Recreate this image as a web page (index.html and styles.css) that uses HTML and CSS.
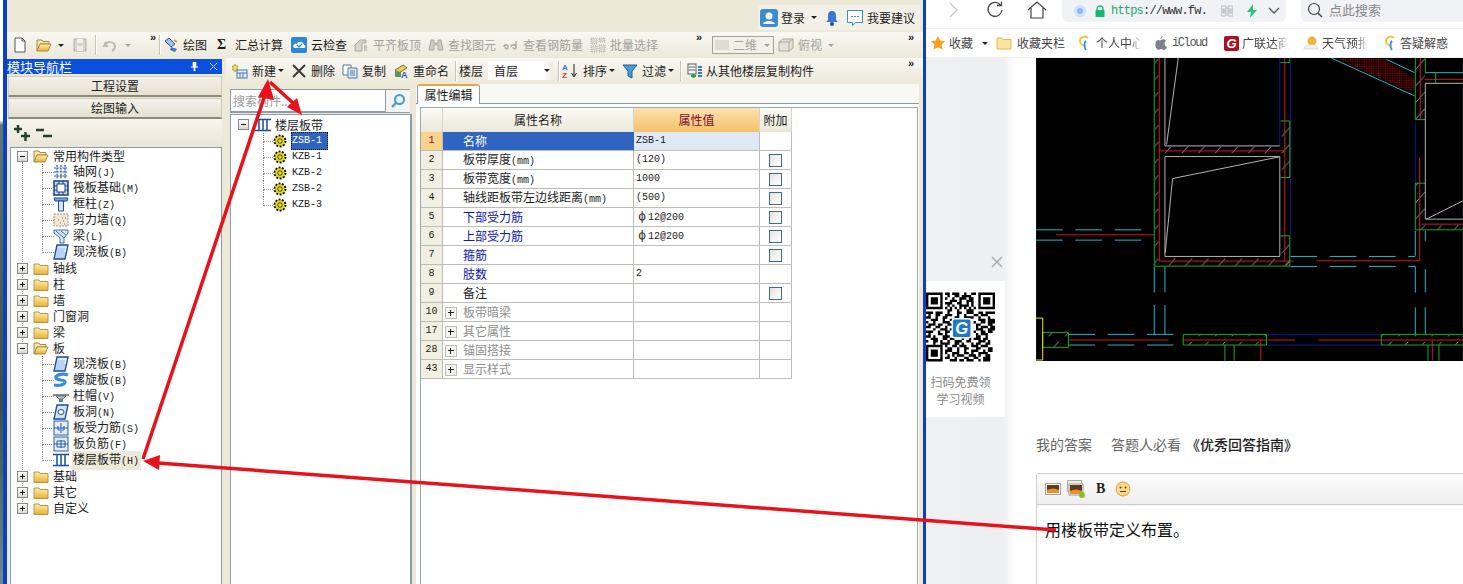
FILE: index.html
```html
<!DOCTYPE html>
<html lang="zh-CN">
<head>
<meta charset="utf-8">
<title>楼层板带</title>
<link rel="stylesheet" href="styles.css">
</head>
<body>
<svg class="defs" width="0" height="0" aria-hidden="true">
  <defs>
    <linearGradient id="fold" x1="0" y1="0" x2="0" y2="1"><stop offset="0" stop-color="#fff0b0"/><stop offset="1" stop-color="#e8b030"/></linearGradient>
    <pattern id="hatch" width="50" height="50" patternUnits="userSpaceOnUse"><path d="M6 42L36 8" stroke="#b8b8b8" stroke-width="2.4"/></pattern>
    <pattern id="dots" width="7" height="7" patternUnits="userSpaceOnUse"><rect width="7" height="7" fill="#1a0000"/><circle cx="3" cy="3" r="1.600" fill="#b80010"/></pattern>
    <symbol id="i-folder" viewBox="0 0 16 16"><path d="M1 4h5l1 1.500h8v9H1z" fill="url(#fold)" stroke="#b89540"/></symbol>
    <symbol id="i-open" viewBox="0 0 16 16"><path d="M1 3h5l1 1.500h6V7H4L1 14z" fill="#f5e6b0" stroke="#a88a40"/><path d="M1 14l3-7h11l-3 7z" fill="url(#fold)" stroke="#a88a40"/></symbol>
    <symbol id="i-grid" viewBox="0 0 16 16"><path d="M1 4h14M1 8h14M1 12h14M4 1v14M8 1v14M12 1v14" stroke="#2a58a8" stroke-width="1.200" stroke-dasharray="2 .8" fill="none"/></symbol>
    <symbol id="i-raft" viewBox="0 0 16 16"><rect x="1" y="1" width="14" height="14" fill="#cfe0f5" stroke="#143c8c" stroke-width="1.500"/><rect x="4" y="4" width="8" height="8" fill="#fff" stroke="#143c8c"/><path d="M1 6h3M1 10h3M12 6h3M12 10h3M6 1v3M10 1v3M6 12v3M10 12v3" stroke="#143c8c"/></symbol>
    <symbol id="i-col" viewBox="0 0 16 16"><path d="M1 2h14l-1 3H2z" fill="#7aa8dc" stroke="#1c4c94"/><path d="M5.500 5h5v10h-5z" fill="#d5e6f7" stroke="#1c4c94"/></symbol>
    <symbol id="i-wall" viewBox="0 0 16 16"><rect x="1" y="2" width="14" height="12" fill="#efe6d8" stroke="#c09070" stroke-dasharray="2 1"/><path d="M7 11h1M10 9h1M11 12h1M5 8h1M9 6h1M12 6h1" stroke="#8c6c58"/></symbol>
    <symbol id="i-beam" viewBox="0 0 16 16"><path d="M1 2h14v3l-4 5v5H7v-5L1 5z" fill="#dbe9f7" stroke="#3c70b0"/><path d="M3 3l8 7M8 3l5 4" stroke="#3c70b0"/></symbol>
    <symbol id="i-slab" viewBox="0 0 16 16"><path d="M4 1h11l-3 14H1z" fill="#b8d4f2" stroke="#1c4c94" stroke-width="1.300"/><path d="M5 3h8l-1 5" stroke="#fff" fill="none"/></symbol>
    <symbol id="i-spiral" viewBox="0 0 16 16"><path d="M15 3C9 1 2 3 3 6s9 1 9 4-6 4-11 3" fill="none" stroke="#3c8cd8" stroke-width="3.200"/></symbol>
    <symbol id="i-cap" viewBox="0 0 16 16"><path d="M0 6h16v2H0z" fill="#8a9098"/><path d="M3 8h10l-3 3H6z" fill="#c8ccd2" stroke="#666"/><path d="M6 11h4v3H6z" fill="#4c80c0"/></symbol>
    <symbol id="i-hole" viewBox="0 0 16 16"><path d="M4 1h11l-3 14H1z" fill="#cfe1f5" stroke="#1c4c94" stroke-width="1.300"/><ellipse cx="8" cy="8" rx="3" ry="2.500" fill="#fff" stroke="#1c4c94"/></symbol>
    <symbol id="i-rebar" viewBox="0 0 16 16"><rect x="1" y="1" width="14" height="14" fill="#e4eef9" stroke="#2a5ca8"/><path d="M1 8h14M8 3v10" stroke="#2a5ca8"/><path d="M5 6v4h2M11 6v4H9" stroke="#2a5ca8" fill="none"/></symbol>
    <symbol id="i-neg" viewBox="0 0 16 16"><rect x="1" y="1" width="14" height="14" fill="#e4eef9" stroke="#2a5ca8"/><path d="M1 8h14M8 4v8M4 5h8v6H4z" stroke="#2a5ca8" fill="none"/></symbol>
    <symbol id="i-strip" viewBox="0 0 16 16"><path d="M0 2.500h16M0 13.500h16" stroke="#1c4c94" stroke-width="1.400"/><path d="M4 3v10M8 3v10M12 3v10" stroke="#4a78b8" stroke-width="2"/></symbol>
    <symbol id="i-gear" viewBox="0 0 16 16"><circle cx="8" cy="8" r="5.500" fill="#e8dc10"/><circle cx="8" cy="8" r="5.500" fill="none" stroke="#111" stroke-width="1.800" stroke-dasharray="2 1.400"/><circle cx="8" cy="8" r="2.200" fill="#f4ec50" stroke="#333"/></symbol>
    <symbol id="i-dis" viewBox="0 0 16 16"><path d="M2 14V8l5-5h6v3H9v8z" fill="#d8d6cc" stroke="#aaa89e"/><path d="M11 8h3v6h-3z" fill="#c8c6bc"/></symbol>
    <symbol id="i-binoc" viewBox="0 0 16 16"><path d="M3 3h3v3h4V3h3l2 10h-5V8H6v5H1z" fill="#cfcdc3" stroke="#aaa89e"/></symbol>
  </defs>
</svg>

<div class="screen">
  <div class="desktop"></div>
  <div class="edge edge-left"></div>

  <div class="app">
    <div class="loginbar">
      <div class="login">
        <svg class="ic18" viewBox="0 0 18 18"><rect width="18" height="18" rx="3" fill="#3c8cd0"/><circle cx="9" cy="7" r="3.500" fill="#fff"/><path d="M3 15c1-4 11-4 12 0z" fill="#fff"/></svg>
        <span>登录</span><i class="caret caret-login"></i>
        <svg class="ic16 bell" viewBox="0 0 16 16"><path d="M8 1c3 0 4 2 4 5v4l2 2H2l2-2V6c0-3 1-5 4-5z" fill="#3a78d8"/><circle cx="8" cy="14" r="2" fill="#1c4c94"/></svg>
        <svg class="ic18 chat" viewBox="0 0 18 18"><path d="M1.500 1.500h15v12h-7l-3 3v-3h-5z" fill="#fff" stroke="#3c8cd0"/><path d="M5 7.500h2M8 7.500h2M11 7.500h2" stroke="#3c8cd0"/></svg>
        <span>我要建议</span>
      </div>
    </div>

    <div class="toolbar main-tools">
      <svg class="ic16" viewBox="0 0 16 16"><path d="M3 1h7l3 3v11H3z" fill="#fff" stroke="#555"/><path d="M10 1v3h3" fill="none" stroke="#555"/></svg>
      <svg class="ic16 t8" viewBox="0 0 16 16"><use href="#i-open"/></svg>
      <i class="caret c6 dark"></i>
      <svg class="ic16 t8" viewBox="0 0 16 16"><path d="M2 2h12v12H2z" fill="#d6d4cc" stroke="#b0aea4"/><path d="M5 2h6v4H5zM5 9h6v5H5z" fill="#efeee8"/></svg>
      <b class="sep s6"></b>
      <svg class="ic16 t6" viewBox="0 0 16 16"><path d="M4 5l-2 4 4 0M3 8c2-4 9-4 10 1 0 2-1 4-3 5" fill="none" stroke="#bdbbb2" stroke-width="2"/></svg>
      <i class="caret c6 dim"></i>
      <span class="more m-a"></span>
      <b class="sep s3"></b>
      <div class="tool t3"><svg class="ic16" viewBox="0 0 16 16"><path d="M2 4l4-3 6 6-4 3z" fill="#a0c0e8" stroke="#3c5c8c"/><path d="M8 10l6 2-2 3-5-2z" fill="#3c78c8"/><path d="M11 3l3 2" stroke="#d8a020" stroke-width="2"/></svg><span>绘图</span></div>
      <div class="tool t10"><span class="sigma">Σ</span><span class="gapx">汇总计算</span></div>
      <div class="tool"><svg class="ic16" viewBox="0 0 16 16"><rect width="16" height="16" rx="2" fill="#2a88d8"/><path d="M3 11c-2-3 1-5 3-4 1-3 6-3 7 1 2 0 2 3 0 3z" fill="#fff"/><path d="M6 8l2 2 3-3" stroke="#2a88d8" fill="none" stroke-width="1.300"/></svg><span>云检查</span></div>
      <div class="tool off off-first"><svg class="ic16" viewBox="0 0 16 16"><use href="#i-dis"/></svg><span>平齐板顶</span></div>
      <div class="tool off"><svg class="ic16" viewBox="0 0 16 16"><use href="#i-binoc"/></svg><span>查找图元</span></div>
      <div class="tool off"><svg class="ic16" viewBox="0 0 16 16"><path d="M1 10c0-3 4-3 4 0s-3 2-3 0M8 10c0-3 5-3 5 0s-3 2-3 0M13 4v7" fill="none" stroke="#aaa89e" stroke-width="1.300"/></svg><span>查看钢筋量</span></div>
      <div class="tool off"><svg class="ic16" viewBox="0 0 16 16"><path d="M1 1h6v6H1zM9 1h6v4H9zM1 9h6v6H1zM9 8h6v7H9z" fill="#dcdad0" stroke="#b0aea4" stroke-dasharray="1 1"/></svg><span>批量选择</span></div>
      <span class="more m38"></span>
      <div class="combo2d"><i class="swatch"></i><span>二维</span><i class="caret c6 dim"></i></div>
      <div class="tool view off"><svg class="ic16" viewBox="0 0 16 16"><path d="M1 5l4-3h10v9l-4 3H1z" fill="#e4e2d8" stroke="#aaa89e"/><path d="M1 5h10v9M11 5l4-3" fill="none" stroke="#aaa89e"/></svg><span>俯视</span></div>
      <i class="caret c6 dim m6"></i>
      <span class="more m-auto"></span>
    </div>

    <div class="workspace">
      <aside class="nav">
        <div class="nav-title"><span>模块导航栏</span>
          <svg class="pin" viewBox="0 0 10 12"><path d="M3 1h4v5h2v1H6v4H4V7H1V6h2z" fill="#fff"/></svg>
          <svg class="navx" viewBox="0 0 10 10"><path d="M1 1l8 8M9 1l-8 8" stroke="#dfe8ff"/></svg>
        </div>
        <button class="nav-btn">工程设置</button>
        <button class="nav-btn">绘图输入</button>
        <div class="nav-tools">
          <svg class="ic16" viewBox="0 0 16 16"><path d="M0 4h8M4 0v8M7 11h9M11.500 7v9" stroke="#24402c" stroke-width="2.400"/></svg>
          <svg class="ic16" viewBox="0 0 16 16"><path d="M0 5h8M7 11h9" stroke="#24402c" stroke-width="2.400"/></svg>
        </div>
        <div class="tree navtree">
          <div class="row top"><i class="exp minus"></i><svg class="ic16 fold" viewBox="0 0 16 16"><use href="#i-open"/></svg><span>常用构件类型</span></div>
          <div class="kid"><svg class="ic16" viewBox="0 0 16 16"><use href="#i-grid"/></svg><span>轴网<span class="lat">(J)</span></span></div>
          <div class="kid"><svg class="ic16" viewBox="0 0 16 16"><use href="#i-raft"/></svg><span>筏板基础<span class="lat">(M)</span></span></div>
          <div class="kid"><svg class="ic16" viewBox="0 0 16 16"><use href="#i-col"/></svg><span>框柱<span class="lat">(Z)</span></span></div>
          <div class="kid"><svg class="ic16" viewBox="0 0 16 16"><use href="#i-wall"/></svg><span>剪力墙<span class="lat">(Q)</span></span></div>
          <div class="kid"><svg class="ic16" viewBox="0 0 16 16"><use href="#i-beam"/></svg><span>梁<span class="lat">(L)</span></span></div>
          <div class="kid last"><svg class="ic16" viewBox="0 0 16 16"><use href="#i-slab"/></svg><span>现浇板<span class="lat">(B)</span></span></div>
          <div class="row top"><i class="exp plus"></i><svg class="ic16 fold" viewBox="0 0 16 16"><use href="#i-folder"/></svg><span>轴线</span></div>
          <div class="row top"><i class="exp plus"></i><svg class="ic16 fold" viewBox="0 0 16 16"><use href="#i-folder"/></svg><span>柱</span></div>
          <div class="row top"><i class="exp plus"></i><svg class="ic16 fold" viewBox="0 0 16 16"><use href="#i-folder"/></svg><span>墙</span></div>
          <div class="row top"><i class="exp plus"></i><svg class="ic16 fold" viewBox="0 0 16 16"><use href="#i-folder"/></svg><span>门窗洞</span></div>
          <div class="row top"><i class="exp plus"></i><svg class="ic16 fold" viewBox="0 0 16 16"><use href="#i-folder"/></svg><span>梁</span></div>
          <div class="row top"><i class="exp minus"></i><svg class="ic16 fold" viewBox="0 0 16 16"><use href="#i-open"/></svg><span>板</span></div>
          <div class="kid"><svg class="ic16" viewBox="0 0 16 16"><use href="#i-slab"/></svg><span>现浇板<span class="lat">(B)</span></span></div>
          <div class="kid"><svg class="ic16" viewBox="0 0 16 16"><use href="#i-spiral"/></svg><span>螺旋板<span class="lat">(B)</span></span></div>
          <div class="kid"><svg class="ic16" viewBox="0 0 16 16"><use href="#i-cap"/></svg><span>柱帽<span class="lat">(V)</span></span></div>
          <div class="kid"><svg class="ic16" viewBox="0 0 16 16"><use href="#i-hole"/></svg><span>板洞<span class="lat">(N)</span></span></div>
          <div class="kid"><svg class="ic16" viewBox="0 0 16 16"><use href="#i-rebar"/></svg><span>板受力筋<span class="lat">(S)</span></span></div>
          <div class="kid"><svg class="ic16" viewBox="0 0 16 16"><use href="#i-neg"/></svg><span>板负筋<span class="lat">(F)</span></span></div>
          <div class="kid last"><svg class="ic16" viewBox="0 0 16 16"><use href="#i-strip"/></svg><span class="hl">楼层板带<span class="lat">(H)</span></span></div>
          <div class="row top"><i class="exp plus"></i><svg class="ic16 fold" viewBox="0 0 16 16"><use href="#i-folder"/></svg><span>基础</span></div>
          <div class="row top"><i class="exp plus"></i><svg class="ic16 fold" viewBox="0 0 16 16"><use href="#i-folder"/></svg><span>其它</span></div>
          <div class="row top"><i class="exp plus"></i><svg class="ic16 fold" viewBox="0 0 16 16"><use href="#i-folder"/></svg><span>自定义</span></div>
        </div>
      </aside>

      <section class="center">
        <div class="toolbar center-tools">
          <div class="tool first"><svg class="ic16" viewBox="0 0 16 16"><path d="M3 1l1 2 2 0-1 2 1 2-2 0-1 2-1-2-2 0 1-2-1-2 2 0z" fill="#f0d860" stroke="#a08820" stroke-width=".6"/><rect x="5" y="7" width="10" height="8" fill="#e4eefa" stroke="#4a78b8"/><path d="M5 10h10M8 10v5M11 10v5" stroke="#4a78b8"/></svg><span>新建</span><i class="caret c6 dark"></i></div>
          <div class="tool"><svg class="ic16" viewBox="0 0 16 16"><path d="M2 2l12 12M14 2L2 14" stroke="#3a3a3a" stroke-width="2"/></svg><span>删除</span></div>
          <div class="tool"><svg class="ic16" viewBox="0 0 16 16"><path d="M1 2h8v10H1z" fill="#fff" stroke="#5078a8"/><path d="M6 5h9v10H6z" fill="#dce8f5" stroke="#5078a8"/><path d="M8 8h5M8 10h5M8 12h5" stroke="#5078a8"/></svg><span>复制</span></div>
          <div class="tool"><svg class="ic16" viewBox="0 0 16 16"><path d="M2 7l8-5 4 3-8 5z" fill="#e8c860" stroke="#807030"/><path d="M2 8v6h6V9z" fill="#609060"/><text class="azmini" x="8" y="15">A</text></svg><span>重命名</span></div>
          <b class="sep s7"></b>
          <span class="floor-label">楼层</span>
          <div class="floor-combo"><span>首层</span><i class="caret c6 dark"></i></div>
          <b class="sep s5"></b>
          <div class="tool t3"><svg class="ic16" viewBox="0 0 16 16"><text class="azA" x="0" y="7">A</text><text class="azZ" x="0" y="15">Z</text><path d="M12 1v12M9.500 10l2.500 4 2.500-4" stroke="#222" fill="none"/></svg><span class="gap3">排序</span><i class="caret c6 dark"></i></div>
          <div class="tool"><svg class="ic16" viewBox="0 0 16 16"><path d="M1 2h14L10 8v7l-4-2V8z" fill="#4a9ad8" stroke="#206090"/></svg><span>过滤</span><i class="caret c6 dark"></i></div>
          <b class="sep s7"></b>
          <div class="tool t6 gap2"><svg class="ic16" viewBox="0 0 16 16"><rect x="1" y="1" width="8" height="10" fill="#fff" stroke="#505868"/><path d="M2 4h6M2 7h6" stroke="#505868"/><path d="M4 13h5M6.500 11v4" stroke="#20a040" stroke-width="2"/><path d="M11 4h4M11 7h4M11 10h4M11 13h4" stroke="#3c78b8" stroke-width="2"/></svg><span>从其他楼层复制构件</span></div>
          <span class="more m-auto"></span>
        </div>

        <div class="panes">
          <div class="pick">
            <div class="search"><span class="ph">搜索构件...</span><div class="search-btn"><svg class="ic16" viewBox="0 0 16 16"><circle cx="9.500" cy="6.500" r="4.500" fill="#eaf4fb" stroke="#4a98cc" stroke-width="2"/><path d="M6 10l-4 4" stroke="#4a98cc" stroke-width="2.400"/></svg></div></div>
            <div class="tree comptree">
              <div class="row top"><i class="exp minus"></i><svg class="ic16 fold2" viewBox="0 0 16 16"><use href="#i-strip"/></svg><span>楼层板带</span></div>
              <div class="kid"><svg class="ic16" viewBox="0 0 16 16"><use href="#i-gear"/></svg><span class="lat lat-sel">ZSB-1</span></div>
              <div class="kid"><svg class="ic16" viewBox="0 0 16 16"><use href="#i-gear"/></svg><span class="lat">KZB-1</span></div>
              <div class="kid"><svg class="ic16" viewBox="0 0 16 16"><use href="#i-gear"/></svg><span class="lat">KZB-2</span></div>
              <div class="kid"><svg class="ic16" viewBox="0 0 16 16"><use href="#i-gear"/></svg><span class="lat">ZSB-2</span></div>
              <div class="kid last"><svg class="ic16" viewBox="0 0 16 16"><use href="#i-gear"/></svg><span class="lat">KZB-3</span></div>
            </div>
          </div>

          <div class="props">
            <div class="tabs"><div class="tab">属性编辑</div></div>
            <div class="prop-body">
              <table class="grid">
                <colgroup><col class="c-n"><col class="c-k"><col class="c-v"><col class="c-x"></colgroup>
                <thead><tr><th></th><th>属性名称</th><th class="th-on">属性值</th><th>附加</th></tr></thead>
                <tbody>
                  <tr class="sel"><td class="num">1</td><td class="key">名称</td><td class="val lat">ZSB-1</td><td></td></tr>
                  <tr><td class="num">2</td><td class="key">板带厚度<span class="lat">(mm)</span></td><td class="val lat">(120)</td><td class="chk"><i class="box"></i></td></tr>
                  <tr><td class="num">3</td><td class="key">板带宽度<span class="lat">(mm)</span></td><td class="val lat">1000</td><td class="chk"><i class="box"></i></td></tr>
                  <tr><td class="num">4</td><td class="key">轴线距板带左边线距离<span class="lat">(mm)</span></td><td class="val lat">(500)</td><td class="chk"><i class="box"></i></td></tr>
                  <tr><td class="num">5</td><td class="key blue">下部受力筋</td><td class="val lat"><span class="rebar">ф</span>12@200</td><td class="chk"><i class="box"></i></td></tr>
                  <tr><td class="num">6</td><td class="key blue">上部受力筋</td><td class="val lat"><span class="rebar">ф</span>12@200</td><td class="chk"><i class="box"></i></td></tr>
                  <tr><td class="num">7</td><td class="key blue">箍筋</td><td class="val"></td><td class="chk"><i class="box"></i></td></tr>
                  <tr><td class="num">8</td><td class="key blue">肢数</td><td class="val lat">2</td><td></td></tr>
                  <tr><td class="num">9</td><td class="key">备注</td><td class="val"></td><td class="chk"><i class="box"></i></td></tr>
                  <tr class="group"><td class="num">10</td><td class="key"><i class="gplus"></i>板带暗梁</td><td></td><td></td></tr>
                  <tr class="group"><td class="num">17</td><td class="key"><i class="gplus"></i>其它属性</td><td></td><td></td></tr>
                  <tr class="group"><td class="num">28</td><td class="key"><i class="gplus"></i>锚固搭接</td><td></td><td></td></tr>
                  <tr class="group"><td class="num">43</td><td class="key"><i class="gplus"></i>显示样式</td><td></td><td></td></tr>
                </tbody>
              </table>
            </div>
          </div>
        </div>
      </section>
    </div>
  </div>

  <div class="edge edge-right"></div>

  <div class="browser">
    <div class="addrbar">
      <svg class="nav-ic back" viewBox="0 0 20 20"><path d="M7 3l7 7-7 7" fill="none" stroke="#c8c8c8" stroke-width="1.300"/></svg>
      <svg class="nav-ic reload" viewBox="0 0 20 20"><path d="M15.500 5A7 7 0 1 0 17 10" fill="none" stroke="#444" stroke-width="1.300"/><path d="M12 5.500h4.500V1.500" fill="none" stroke="#444" stroke-width="1.300"/></svg>
      <svg class="nav-ic home" viewBox="0 0 20 20"><path d="M1 10l9-8 9 8M4 8v10h12V8" fill="none" stroke="#444" stroke-width="1.200"/></svg>
      <div class="url">
        <svg class="url-shield" viewBox="0 0 14 14"><circle cx="7" cy="7" r="6" fill="#cfe0fb"/><circle cx="7" cy="7" r="3" fill="#90b8f4"/></svg>
        <svg class="url-lock" viewBox="0 0 12 12"><path d="M3 5V4a3 3 0 0 1 6 0v1" fill="none" stroke="#16b870" stroke-width="1.300"/><rect x="1.500" y="5" width="9" height="7" rx="1" fill="#16b870"/></svg>
        <span class="url-text"><span class="url-https">https</span>://www.fw.</span>
        <svg class="url-apps" viewBox="0 0 12 12"><path d="M0 1h5v3H0zM7 1h5v3H7zM0 5h3v2H0zM4 5h4v2H4zM9 5h3v2H9zM0 8h5v3H0zM7 8h5v3H7z" fill="none" stroke="#aab0b8" stroke-width=".8"/></svg>
        <svg class="url-bolt" viewBox="0 0 10 14"><path d="M6 0L0 8h4l-1 6 7-8H6z" fill="#20c878"/></svg>
        <svg class="url-chev" viewBox="0 0 12 8"><path d="M1 1l5 5 5-5" fill="none" stroke="#555" stroke-width="1.300"/></svg>
      </div>
      <div class="websearch">
        <svg class="mag" viewBox="0 0 16 16"><circle cx="7" cy="7" r="5.500" fill="none" stroke="#444" stroke-width="1.200"/><path d="M11 11l4 4" stroke="#444" stroke-width="1.400"/></svg>
        <span>点此搜索</span>
      </div>
    </div>
    <div class="bookmarks">
      <div class="bm bm1"><svg class="ic16" viewBox="0 0 16 16"><path d="M8 1l2.200 4.600 5 .6-3.700 3.400 1 5L8 12.200 3.500 14.600l1-5L.8 6.200l5-.6z" fill="#f5a020"/></svg><span>收藏</span></div>
      <i class="caret c6 dark bm-caret"></i>
      <div class="bm bm2"><svg class="ic16" viewBox="0 0 16 16"><path d="M1 3h5l1 1.500h8V14H1z" fill="#fbe3a0" stroke="#e8b850"/></svg><span>收藏夹栏</span></div>
      <div class="bm bm3"><svg class="ic-c" viewBox="0 0 12 16"><path d="M10 3C7 0 2 2 2 6s3 4 5 5" fill="none" stroke="#f0c040" stroke-width="1.800"/><path d="M8 6c-2 2-2 6 0 9" fill="none" stroke="#3090e0" stroke-width="1.800"/></svg><span class="fade">个人中心</span></div>
      <div class="bm bm4"><svg class="ic-c" viewBox="0 0 12 16"><path d="M8 1C7 3 6 4 5 4c1-2 2-3 3-3zM6 5c2-1 4-1 5 1-2 1-2 5 1 6-1 2-2 3-3 3s-2-1-3-1-2 1-3 1c-3-2-4-9 0-10 1 0 2 1 3 0z" fill="#7c8288"/></svg><span class="lat bm-lat">iCloud</span></div>
      <div class="bm bm5"><span class="glogo">G</span><span class="fade">广联达商</span></div>
      <div class="bm bm6"><svg class="ic16" viewBox="0 0 16 16"><circle cx="9" cy="6" r="4.500" fill="#f5b040"/><path d="M1 14c0-3 3-5 6-4 2-1 7 0 8 4z" fill="#eef2f6" stroke="#c8d0d8" stroke-width=".7"/></svg><span class="fade">天气预报</span></div>
      <div class="bm bm7"><svg class="ic-c" viewBox="0 0 12 16"><path d="M10 3C7 0 2 2 2 6s3 4 5 5" fill="none" stroke="#f0c040" stroke-width="1.800"/><path d="M8 6c-2 2-2 6 0 9" fill="none" stroke="#3090e0" stroke-width="1.800"/></svg><span>答疑解惑</span></div>
    </div>
    <div class="page">
      <aside class="float">
        <svg class="float-x" viewBox="0 0 12 12"><path d="M1 1l10 10M11 1L1 11" stroke="#a8aaae" stroke-width="1.400"/></svg>
        <div class="qr-card">
          <svg class="qr" viewBox="0 0 29 29">
            <path class="qr-f" d="M0 0h7v7H0zM1 1v5h5V1zM2 2h3v3H2zM22 0h7v7h-7zM23 1v5h5V1zM24 2h3v3h-3zM0 22h7v7H0zM1 23v5h5v-5zM2 24h3v3H2z"/>
            <path class="qr-d" transform="translate(0 .5)" d="M8 0h2m1 0h3m2 0h1m2 0h2M9 1h1m2 0h2m1 0h4M8 2h1m2 0h1m2 0h3m1 0h2M10 3h3m1 0h1m2 0h3M8 4h3m2 0h2m2 0h1m1 0h1M9 5h1m1 0h1m2 0h4m1 0h1M8 6h1m1 0h1m1 0h1m1 0h1m1 0h1m1 0h1m1 0h1M9 7h2m2 0h1m3 0h3M0 8h3m1 0h3m2 0h1m3 0h2m2 0h3m2 0h2m1 0h4M1 9h1m2 0h2m2 0h3m2 0h1m2 0h1m3 0h2m1 0h3M0 10h2m2 0h1m2 0h2m3 0h2m2 0h4m2 0h1m3 0h1M2 11h3m2 0h1m2 0h3m1 0h1m7 0h3m1 0h3M0 12h1m2 0h1m3 0h3m1 0h1m8 0h1m2 0h2m1 0h3M1 13h3m1 0h2m2 0h2m1 0h1m8 0h2m3 0h2M0 14h2m2 0h2m2 0h1m2 0h1m9 0h1m1 0h3m1 0h2M3 15h1m2 0h3m1 0h2m9 0h3m2 0h3M0 16h3m2 0h1m2 0h2m2 0h1m7 0h1m2 0h2m1 0h2M1 17h1m3 0h2m1 0h1m3 0h4m2 0h1m2 0h1m1 0h3M0 18h2m1 0h1m3 0h3m2 0h2m1 0h4m2 0h2m2 0h1M2 19h3m2 0h2m1 0h2m3 0h1m2 0h1m1 0h3m1 0h2M0 20h1m2 0h2m1 0h1m2 0h1m2 0h3m2 0h2m3 0h3m1 0h1M3 21h1m2 0h4m2 0h2m1 0h1m3 0h1m1 0h2m2 0h2M8 22h1m2 0h2m1 0h3m2 0h3m1 0h3M9 23h2m2 0h1m2 0h2m3 0h2m3 0h2M8 24h3m2 0h1m2 0h1m2 0h3m2 0h1m1 0h2M8 25h1m2 0h3m2 0h2m1 0h1m2 0h4M9 26h1m1 0h1m1 0h3m2 0h3m1 0h1m2 0h2M8 27h2m2 0h1m3 0h2m2 0h2m2 0h3M10 28h3m1 0h2m1 0h3m2 0h1m1 0h3"/>
            <rect class="qr-logo" x="11" y="11" width="8" height="8" rx="1"/>
            <text class="qr-g" x="15" y="17.500">G</text>
          </svg>
          <p class="qr-text">扫码免费领<br>学习视频</p>
        </div>
      </aside>
      <main class="answer">
        <svg class="cad" viewBox="18 6 1282 910">
          <rect class="bg" x="18" y="6" width="1282" height="910"/>
          <g class="h">
            <rect x="375" y="6" width="30" height="624" class="hatch"/><rect x="405" y="272" width="345" height="28" class="hatch"/><rect x="405" y="604" width="375" height="26" class="hatch"/><rect x="752" y="195" width="28" height="170" class="hatch"/><rect x="752" y="540" width="28" height="90" class="hatch"/><rect x="1157" y="6" width="30" height="185" class="hatch"/><rect x="1157" y="382" width="30" height="140" class="hatch"/><rect x="1187" y="492" width="113" height="30" class="hatch"/><rect x="460" y="837" width="250" height="30" class="hatch"/><rect x="1055" y="837" width="245" height="30" class="hatch"/><rect x="38" y="830" width="77" height="45" class="hatch"/>
          </g>
          <path class="dots" d="M920 8h145l90 62v35l-35-5z"/>
          <path class="cy" d="M905 6l250 114M1070 10l85 40"/>
          <path class="cy dash" d="M18 522H372M18 553H372M782 602H1157M782 632H1157M115 836H460M115 868H460"/>
          <path class="cy" d="M373 632v78M373 748v88M405 632v78M405 748v88M1157 632v78M1157 755v81M1187 525v30M1187 640v70M1187 755v81M1157 525v75M1187 50H1300"/>
          <path class="bl" d="M750 6v264M782 20v520M1157 200v180M715 837h340M715 868h340"/>
          <path class="rd" d="M388 6v610h403M765 6v610M388 285h377M78 537h295M860 615h310V305M1172 6v185M1185 70h115M1175 505h125M115 853h300M460 853h250M715 853h80M865 853h435M693 853v62M1208 853v62"/>
          <path class="gn" d="M373 6v625h407v-91h-28M780 365h-28M752 195h28v170M752 20h28V6M1157 6v185h30M1187 6v44M1218 50v30M1157 382h30M1157 382v140h143M460 836h250v32H460zM1055 836h245M1055 868h245M1055 836v32M38 830h77v45H38zM585 868v47M613 868v47M1195 868v47M1228 868v47"/>
          <path class="gy" d="M405 6v264h345M405 302h345v300H405zM445 6l-35 260M748 303l-320 65-22 222M1187 82h113M1187 82v408h113M1190 490l110-55"/>
          <path class="yl" d="M18 787h20v126H18"/>
        </svg>
        <div class="ans-tabs"><span>我的答案</span><span class="t2">答题人必看</span><span class="t3b">《优秀回答指南》</span></div>
        <div class="editor">
          <div class="ed-tools">
            <svg class="ed-ic" viewBox="0 0 16 12"><rect x=".5" y=".5" width="15" height="11" fill="#fff" stroke="#b0a090"/><rect x="2" y="2" width="12" height="8" fill="#5c3c20"/><path d="M2 7c4-2 8-2 12 0v3H2z" fill="#e89030"/></svg>
            <svg class="ed-ic2" viewBox="0 0 18 18"><rect x=".5" y=".5" width="14" height="11" fill="#eee" stroke="#aaa"/><rect x="2" y="4" width="14" height="11" fill="#fff" stroke="#a89888"/><rect x="3" y="5" width="12" height="9" fill="#5c3c20"/><path d="M3 11c4-2 8-2 12 0v3H3z" fill="#e89030"/><circle cx="15" cy="15" r="3" fill="#80c030"/></svg>
            <b class="ed-b">B</b>
            <svg class="ed-ic3" viewBox="0 0 16 16"><circle cx="8" cy="8" r="7" fill="#fbd890" stroke="#e0a040"/><circle cx="5.500" cy="6.500" r="1" fill="#704010"/><circle cx="10.500" cy="6.500" r="1" fill="#704010"/><path d="M5 10.500h6" stroke="#704010"/></svg>
          </div>
          <p class="ed-text">用楼板带定义布置。</p>
        </div>
      </main>
    </div>
  </div>

  <svg class="arrows" viewBox="0 0 1463 584">
    <path class="ar" d="M1056 530L158 463M143 459L265 95M270 82L293 103"/>
    <path class="arh" d="M143 461L160 455L159 470zM268 79L258 97L274 100zM302 115L287 107L297 98z"/>
  </svg>
</div>
</body>
</html>
```
FILE: styles.css
```css
* { box-sizing: border-box; }
html, body { margin: 0; padding: 0; }
body { font: 12px/16px "Noto Sans CJK SC", "Liberation Sans", sans-serif; color: #1c1c1c; background: #fff; overflow: hidden; }
.defs { position: absolute; }
.screen { position: relative; display: flex; width: 1463px; height: 584px; overflow: hidden; }
.desktop { width: 3px; background: linear-gradient(#fff 0, #fff 120px, #5c7a6c 125px, #34503f 400px, #6c8a90 584px); }
.edge { background: #0c3fc8; }
.edge-left { width: 4px; }
.edge-right { width: 3px; }
.app { width: 916px; background: #ece9d8; display: flex; flex-direction: column; }
svg { display: block; flex: none; }
.ic16 { width: 16px; height: 16px; }
.ic18 { width: 18px; height: 18px; }
.lat { font-family: "Liberation Mono", monospace; font-size: 10px; }

.loginbar { height: 32px; display: flex; justify-content: flex-end; padding: 5px 3px 2px 0; flex: none; }
.login { width: 162px; display: flex; align-items: center; background: #f3f1e7; padding-left: 2px; }
.login span { white-space: nowrap; }
.login > span:nth-of-type(1) { margin-left: 3px; }
.login > span:nth-of-type(2) { margin-left: 3px; }
.caret-login { margin-left: 6px; }
.bell { margin-left: 7px; }
.chat { margin-left: 6px; }

.toolbar { display: flex; align-items: center; background: linear-gradient(#f9f8f2, #ece9db); white-space: nowrap; flex: none; }
.main-tools { height: 26px; padding-left: 5px; }
.center-tools { height: 25px; padding-left: 6px; }
.tool { display: flex; align-items: center; gap: 4px; margin-left: 8px; }
.tool.first { margin-left: 0; }
.tool.off { color: #a3a19a; margin-left: 7px; }
.tool.off-first { margin-left: 6px; }
.tool.view { margin-left: 4px; }
.t3 { margin-left: 3px; }
.t6 { margin-left: 6px; }
.t8 { margin-left: 8px; }
.t10 { margin-left: 10px; }
.gapx { margin-left: 4px; }
.gap3 { margin-left: 1px; }
.gap2 { gap: 3px; }
.sigma { font: bold 14px/16px "Liberation Serif", serif; width: 10px; }
.sep { display: block; width: 1px; height: 20px; background: #c8c5b4; box-shadow: 1px 0 #fff; flex: none; }
.s3 { margin-left: 1px; }
.s5 { margin-left: 5px; }
.s6 { margin-left: 7px; }
.s7 { margin-left: 6px; }
.caret { display: block; flex: none; width: 0; height: 0; border-style: solid; border-width: 3px 3px 0; border-color: #222 transparent transparent; }
.c6 { margin-left: 2px; }
.caret.dim { border-top-color: #a3a19a; margin-left: 7px; }
.caret.dark { margin-left: 2px; }
.main-tools > .caret.dark { margin-left: 6px; }
.caret.m6 { margin-left: 6px; }
.more { width: 8px; height: 8px; flex: none; position: relative; align-self: flex-start; margin-top: 4px; }
.more::before { content: "»"; position: absolute; left: 0; top: -5px; font: bold 11px/12px "Liberation Sans", sans-serif; color: #222; }
.m-a { margin-left: 19px; }
.m38 { margin-left: 38px; }
.m-auto { margin-left: auto; margin-right: 7px; }
.combo2d { display: flex; align-items: center; width: 62px; height: 18px; margin-left: 8px; border: 1px solid #a3a19a; color: #a3a19a; padding: 0 2px; background: #f3f1e7; }
.swatch { display: block; width: 14px; height: 10px; background: #dedcd2; margin-right: 4px; }

.center-tools .tool { margin-left: 7px; }
.center-tools .tool.first { margin-left: 0; }
.center-tools .tool.t3 { margin-left: 3px; }
.center-tools .tool.t6 { margin-left: 6px; }

.workspace { flex: 1; display: flex; min-height: 0; }
.nav { width: 215px; padding-top: 1px; display: flex; flex-direction: column; flex: none; }
.nav-title { height: 15px; background: #0b50dc; color: #fff; font-size: 13px; line-height: 15px; display: flex; align-items: center; }
.pin { width: 9px; height: 11px; margin-left: auto; margin-right: 10px; }
.navx { width: 9px; height: 9px; margin-right: 4px; }
.nav-btn { display: block; height: 21px; margin: 2px 0 0 1px; width: 214px; padding: 0; font: inherit; color: #1c1c1c; background: linear-gradient(#f4f2ea, #e4e1d0); border: 1px solid #cfccbc; border-bottom: 2px solid #8c897a; }
.nav-btn + .nav-btn { margin-top: 1px; }
.nav-tools { height: 28px; display: flex; align-items: center; gap: 6px; padding-left: 7px; background: linear-gradient(#f7f5ed, #e9e6d8); }
.tree { position: relative; background: #fff; border: 1px solid #8d9ca8; flex: 1; }
.navtree { margin-left: 3px; border-bottom: 0; }
.navtree::before { content: ""; position: absolute; left: 11px; top: 14px; height: 350px; border-left: 1px dotted #8a8a8a; }
.row { height: 16px; display: flex; align-items: center; position: relative; white-space: nowrap; }
.row.top { padding-left: 6px; }
.exp { display: block; width: 11px; height: 11px; border: 1px solid #8a8a8a; background: linear-gradient(#fff, #d8d8d0); position: relative; flex: none; z-index: 1; }
.exp::before { content: ""; position: absolute; left: 2px; top: 4px; width: 5px; height: 1px; background: #111; }
.plus::after { content: ""; position: absolute; left: 4px; top: 2px; width: 1px; height: 5px; background: #111; }
.fold { margin: 0 4px 0 5px; }
.kid { height: 16px; display: flex; align-items: center; position: relative; white-space: nowrap; padding-left: 42px; }
.kid svg { margin-right: 4px; }
.kid::before { content: ""; position: absolute; left: 31px; top: 0; width: 11px; height: 8px; border-left: 1px dotted #8a8a8a; border-bottom: 1px dotted #8a8a8a; }
.kid::after { content: ""; position: absolute; left: 31px; top: 8px; height: 8px; border-left: 1px dotted #8a8a8a; }
.kid.last::after { display: none; }
.hl { background: #ece9d8; padding: 0 2px 0 1px; margin-left: -1px; }

.center { width: 697px; display: flex; flex-direction: column; margin-left: 4px; flex: none; margin-right: -4px; }
.floor-label { margin-left: 3px; }
.floor-combo { width: 65px; height: 19px; margin-left: 5px; background: linear-gradient(90deg, #fff 85%, #eeece2); display: flex; align-items: center; justify-content: space-between; padding: 0 3px 0 6px; }
.center-tools .floor-combo .caret { margin: 0; }
.center-tools > .tool .caret { margin-left: -2px; }
.center-tools .tool > span { line-height: 16px; }
.panes { flex: 1; display: flex; min-height: 0; padding-top: 1px; }
.pick { width: 190px; padding: 5px 4px 0 4px; display: flex; flex-direction: column; flex: none; }
.search { height: 24px; display: flex; align-items: center; background: #fff; border: 1px solid #8d9ca8; border-right: 0; border-bottom: 2px solid #8d9ca8; margin-right: 2px; }
.ph { flex: 1; padding-left: 2px; color: #9a9a9a; font-size: 12px; border-right: 1px solid #8d9ca8; height: 22px; line-height: 21px; }
.search-btn { width: 24px; height: 22px; display: flex; align-items: center; justify-content: center; background: #f4f4f2; }
.comptree { margin: 1px 0 0; border: 1px solid #8d9ca8; border-width: 1px 2px 0 1px; padding-top: 1px; }
.comptree .row.top { padding-left: 7px; height: 17px; }
.fold2 { margin: 0 4px 0 6px; }
.comptree .kid { padding-left: 41px; }
.comptree .kid::before, .comptree .kid::after { left: 32px; }
.comptree .kid::before { width: 9px; }
.lat-sel { background: #2f65c0; color: #fff; padding: 1px 6px 1px 1px; margin-left: -1px; outline: 1px dotted #111; outline-offset: -1px; }
.props { width: 503px; background: #fff; display: flex; flex-direction: column; flex: none; }
.tabs { height: 20px; background: #f8f8f5; border-bottom: 1px solid #8d9ca8; padding-left: 1px; flex: none; }
.tab { width: 63px; height: 20px; background: #fff; border: 1px solid #8d9ca8; border-top: 2px solid #f0a640; border-bottom: 0; border-radius: 3px 3px 0 0; text-align: center; line-height: 18px; }
.prop-body { flex: 1; margin: 3px 1px 0 4px; border: 1px solid #9aa8b4; border-bottom: 0; background: #fff; }
.grid { width: 371px; table-layout: fixed; border-collapse: separate; border-spacing: 0; }
.c-n { width: 22px; } .c-k { width: 191px; } .c-v { width: 126px; } .c-x { width: 32px; }
.grid th { height: 24px; font-weight: 400; background: linear-gradient(#fbfaf4, #ebe8da); border-right: 1px solid #d8d5c6; padding: 0; }
.grid .th-on { background: linear-gradient(#fbe3b0, #f4c068); color: #7a0b33; }
.grid td { height: 19px; padding: 0; line-height: 14px; border-right: 1px solid #bdbdb8; border-bottom: 1px solid #bdbdb8; white-space: nowrap; overflow: hidden; }
.grid .num { background: #f1efe2; text-align: center; font: 10px/14px "Liberation Mono", monospace; }
.sel .num { background: #fbd28a; color: #8a0d2c; }
.sel .key { background: #2f65c0; color: #fff; border-right-color: #2f65c0; }
.sel .val { background: #dfe8f5; }
.key { padding-left: 20px !important; }
.key.blue { color: #0c16b0; }
.val { padding-left: 2px !important; }
.rebar { display: inline-block; width: 12px; text-align: center; font-size: 12px; }
.chk { text-align: center; }
.box { display: block; width: 13px; height: 13px; margin: 0 auto; border: 1px solid #456a80; background: linear-gradient(135deg, #e4e4de, #fff); }
.group .key { color: #8e8e8e; padding-left: 2px !important; }
.group .num { background: #f1efe2; }
.gplus { display: inline-block; vertical-align: -2px; width: 12px; height: 12px; margin-right: 6px; border: 1px solid #bdbdb8; background: #f4f4f0; position: relative; }
.gplus::before { content: ""; position: absolute; left: 2px; top: 4px; width: 6px; height: 1px; background: #222; }
.gplus::after { content: ""; position: absolute; left: 4px; top: 2px; width: 1px; height: 6px; background: #222; }
.azA { font: bold 8px "Liberation Sans", sans-serif; fill: #3c78c8; }
.azZ { font: bold 8px "Liberation Sans", sans-serif; fill: #c83c3c; }
.azmini { font: bold 9px "Liberation Sans", sans-serif; fill: #2a58a8; }

.browser { flex: 1; min-width: 0; display: flex; flex-direction: column; background: #fff; }
.addrbar { height: 29px; display: flex; align-items: flex-start; border-bottom: 1px solid #eee; flex: none; padding-left: 17px; }
.nav-ic { width: 20px; height: 20px; }
.reload { margin-left: 22px; }
.home { margin-left: 22px; }
.url { width: 224px; height: 22px; margin-left: 15px; background: #f0f2f6; border-radius: 0 0 6px 6px; display: flex; align-items: center; padding-left: 11px; }
.url-shield { width: 14px; height: 14px; }
.url-lock { width: 12px; height: 12px; margin-left: 7px; }
.url-text { font: 12px/16px "Liberation Mono", monospace; margin-left: 5px; width: 100px; white-space: nowrap; color: #333; letter-spacing: -.8px; }
.url-https { color: #18a868; }
.url-apps { width: 12px; height: 12px; margin-left: 10px; }
.url-bolt { width: 10px; height: 14px; margin-left: 14px; }
.url-chev { width: 12px; height: 8px; margin-left: 11px; }
.websearch { width: 162px; height: 22px; margin-left: 15px; background: #f0f2f6; border-radius: 0 0 0 6px; display: flex; align-items: center; padding: 0 0 3px 6px; color: #888; font-size: 13px; }
.mag { width: 16px; height: 16px; margin-right: 6px; }
.bookmarks { height: 29px; display: flex; align-items: center; flex: none; white-space: nowrap; padding-left: 4px; color: #444; overflow: hidden; border-bottom: 1px solid #eee; }
.bm { display: flex; align-items: center; gap: 3px; flex: none; }
.ic-c { width: 12px; height: 16px; }
.fade { width: 48px; -webkit-mask-image: linear-gradient(90deg, #000 70%, transparent 95%); mask-image: linear-gradient(90deg, #000 70%, transparent 95%); }
.bm-caret { margin-left: 10px !important; }
.bm1 { width: 42px; }
.bm2 { margin-left: 8px; gap: 5px; }
.bm3 { margin-left: 13px; gap: 6px; }
.bm4 { margin-left: 11px; gap: 0; }
.bm-lat { font-size: 12px; letter-spacing: -1.400px; margin-left: 5px; color: #555; width: 39px; }
.bm5 { margin-left: 13px; gap: 3px; }
.glogo { display: block; width: 15px; height: 15px; border-radius: 2px; background: #a8131f; color: #fff; font: italic bold 13px/15px "Liberation Sans", sans-serif; text-align: center; }
.bm6 { margin-left: 13px; gap: 3px; }
.bm7 { margin-left: 14px; gap: 4px; }
.page { flex: 1; display: flex; min-height: 0; }
.float { width: 90px; flex: none; background: linear-gradient(90deg, #eef0f2 0, #eeeff1 85%, #fff); padding-top: 197px; position: relative; }
.float-x { position: absolute; left: 65px; top: 198px; width: 12px; height: 12px; }
.qr-card { width: 79px; height: 136px; margin-top: 26px; background: #fff; padding-top: 11px; }
.qr { width: 69px; height: 70px; }
.qr-f { fill: #000; fill-rule: evenodd; }
.qr-d { fill: none; stroke: #000; stroke-width: 1; }
.qr-logo { fill: #1c78c8; stroke: #fff; stroke-width: .6; }
.qr-g { font: italic bold 7px "Liberation Sans", sans-serif; fill: #fff; text-anchor: middle; }
.qr-text { margin: 11px 10px 0 0; color: #8a8a8a; font-size: 12px; line-height: 17px; text-align: center; white-space: nowrap; }
.answer { flex: 1; min-width: 0; margin-left: 20px; overflow: hidden; }
.cad { width: 427px; height: 303px; }
.bg { fill: #000; }
.cad path { fill: none; stroke-width: 3; }
.hatch { fill: url(#hatch); }
.cad .dots { fill: url(#dots); stroke: none; }
.cy { stroke: #20b8c8; }
.dash { stroke-dasharray: 80 38; }
.bl { stroke: #0a1a9c; }
.rd { stroke: #d01820; }
.gn { stroke: #10b020; }
.gy { stroke: #b4b4b4; }
.yl { stroke: #e8e820; }
.ans-tabs { margin-top: 74px; height: 18px; line-height: 18px; font-size: 14px; color: #666; display: flex; white-space: nowrap; }
.t2 { margin-left: 19px; }
.t3b { margin-left: 5px; color: #222; font-weight: 500; }
.editor { margin-top: 20px; height: 140px; border: 1px solid #cfcfcf; border-right: 0; border-radius: 3px 0 0 0; }
.ed-tools { height: 30px; display: flex; align-items: center; background: linear-gradient(#fdfdfd, #eeeeee); box-shadow: 0 1px 1px #ccc; padding-left: 8px; }
.ed-ic { width: 16px; height: 12px; }
.ed-ic2 { width: 18px; height: 18px; margin-left: 6px; }
.ed-b { font: bold 14px/16px "Liberation Serif", serif; margin-left: 11px; color: #222; }
.ed-ic3 { width: 16px; height: 16px; margin-left: 10px; }
.ed-text { margin: 15px 0 0 8px; font-size: 16px; line-height: 20px; color: #111; }
.arrows { position: absolute; left: 0; top: 0; width: 1463px; height: 584px; pointer-events: none; }
.ar { fill: none; stroke: #e8121c; stroke-width: 3.500; }
.arh { fill: #e8121c; }
```
